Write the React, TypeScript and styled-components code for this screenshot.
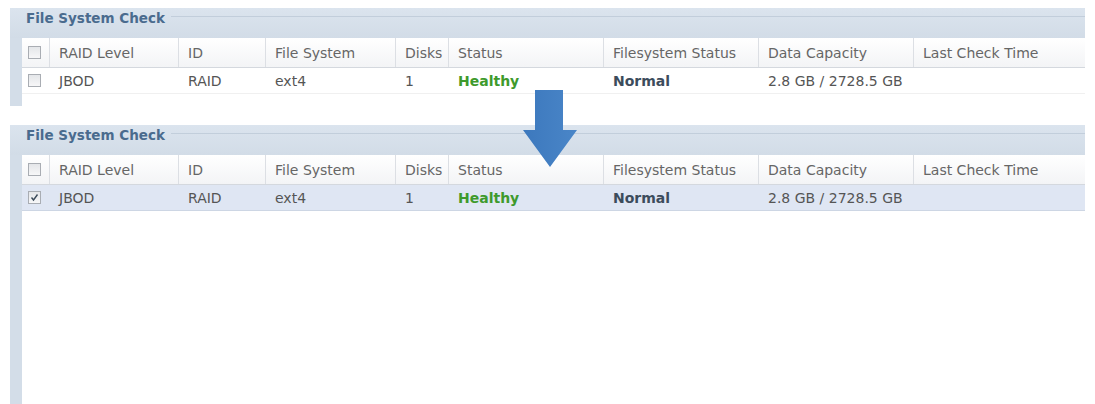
import React from 'react';
import styled, { createGlobalStyle } from 'styled-components';

const GlobalStyle = createGlobalStyle`
  html, body {
    margin: 0;
    padding: 0;
    background: #ffffff;
    overflow: hidden;
  }
  body {
    font-family: "DejaVu Sans", Verdana, sans-serif;
    font-size: 14px;
    color: #555;
  }
`;

const columns = [
  { key: 'level', label: 'RAID Level' },
  { key: 'id', label: 'ID' },
  { key: 'fs', label: 'File System' },
  { key: 'disks', label: 'Disks' },
  { key: 'status', label: 'Status' },
  { key: 'fsStatus', label: 'Filesystem Status' },
  { key: 'capacity', label: 'Data Capacity' },
  { key: 'lastCheck', label: 'Last Check Time' },
];

const row = {
  level: 'JBOD',
  id: 'RAID',
  fs: 'ext4',
  disks: '1',
  status: 'Healthy',
  fsStatus: 'Normal',
  capacity: '2.8 GB / 2728.5 GB',
  lastCheck: '',
};

const GRID = '27px 129px 87px 130px 53px 155px 155px 155px 1fr';

const Page = styled.div`
  position: relative;
  display: flex;
  flex-direction: column;
  gap: 19px;
  width: 1085px;
  height: 404px;
  padding: 8px 0 0 10px;
  box-sizing: border-box;
  overflow: hidden;
`;

const Panel = styled.section<{ $tall?: boolean }>`
  display: flex;
  flex-direction: column;
  flex-shrink: 0;
  border-left: 12px solid #d3dde8;
  background: #fff;
  padding-bottom: 12px;
  min-height: ${({ $tall }) => ($tall ? '300px' : 'auto')};
`;

const TitleBar = styled.div`
  display: flex;
  align-items: flex-start;
  height: 30px;
  margin-left: -12px;
  padding-left: 16px;
  background: linear-gradient(#dbe4ee, #d2dce7);
`;

const Title = styled.span`
  padding: 2px 6px 0 0;
  font-weight: bold;
  font-size: 13.5px;
  color: #4a6b8e;
`;

const TitleRule = styled.div`
  flex: 1;
  margin-top: 8px;
  height: 1px;
  background: #c2cedb;
`;

const Row = styled.div<{ $header?: boolean; $selected?: boolean }>`
  display: grid;
  grid-template-columns: ${GRID};
  height: ${({ $header }) => ($header ? '30px' : '26px')};
  align-items: center;
  background: ${({ $header, $selected }) =>
    $header ? 'linear-gradient(#ffffff, #f3f4f6)' : $selected ? '#dfe6f3' : '#fff'};
  border-bottom: 1px solid
    ${({ $header, $selected }) => ($header ? '#d4d8de' : $selected ? '#cdd6e4' : '#f0f0f0')};
  box-sizing: border-box;
`;

const Cell = styled.div<{ $header?: boolean; $sep?: boolean }>`
  height: 100%;
  display: flex;
  align-items: center;
  padding-left: 9px;
  white-space: nowrap;
  overflow: hidden;
  color: ${({ $header }) => ($header ? '#666' : '#555')};
  border-left: 1px solid ${({ $sep }) => ($sep ? '#dcdfe4' : 'transparent')};
  box-sizing: border-box;
`;

const CheckCell = styled.div`
  display: flex;
  align-items: center;
  padding-left: 6px;
`;

const Box = styled.span`
  display: flex;
  align-items: center;
  justify-content: center;
  width: 13px;
  height: 13px;
  border: 1px solid #a9adb3;
  background: linear-gradient(#e4e6e9, #f7f7f8);
  box-sizing: border-box;
`;

const StatusText = styled.span<{ $tone: 'good' | 'plain' }>`
  font-weight: bold;
  color: ${({ $tone }) => ($tone === 'good' ? '#3e9a2c' : '#3c4c5c')};
`;

const Arrow = styled.svg`
  position: absolute;
  left: 522px;
  top: 90px;
`;

const Checkbox = ({ checked }: { checked?: boolean }) => (
  <Box>
    {checked && (
      <svg width="9" height="9" viewBox="0 0 9 9">
        <path d="M1.5 4.5 L3.5 7 L7.5 1.5" fill="none" stroke="#3a4a5a" strokeWidth="1.4" />
      </svg>
    )}
  </Box>
);

const renderValue = (key: string, value: string) => {
  if (key === 'status') return <StatusText $tone="good">{value}</StatusText>;
  if (key === 'fsStatus') return <StatusText $tone="plain">{value}</StatusText>;
  return value;
};

const CheckPanel = ({ selected, tall }: { selected?: boolean; tall?: boolean }) => (
  <Panel $tall={tall}>
    <TitleBar>
      <Title>File System Check</Title>
      <TitleRule />
    </TitleBar>
    <Row $header>
      <CheckCell>
        <Checkbox />
      </CheckCell>
      {columns.map(({ key, label }) => (
        <Cell key={key} $header $sep>
          {label}
        </Cell>
      ))}
    </Row>
    <Row $selected={selected}>
      <CheckCell>
        <Checkbox checked={selected} />
      </CheckCell>
      {columns.map(({ key }) => (
        <Cell key={key}>{renderValue(key, (row as Record<string, string>)[key])}</Cell>
      ))}
    </Row>
  </Panel>
);

export default function App() {
  return (
    <>
      <GlobalStyle />
      <Page>
        <CheckPanel />
        <CheckPanel selected tall />
        <Arrow width="56" height="78" viewBox="0 0 56 78">
          <defs>
            <linearGradient id="arrowFill" x1="0" y1="0" x2="1" y2="0">
              <stop offset="0" stopColor="#3c78bd" />
              <stop offset="1" stopColor="#4a86c8" />
            </linearGradient>
          </defs>
          <path d="M13 0 H41 V40 H55 L28 77 L1 40 H13 Z" fill="url(#arrowFill)" />
        </Arrow>
      </Page>
    </>
  );
}
